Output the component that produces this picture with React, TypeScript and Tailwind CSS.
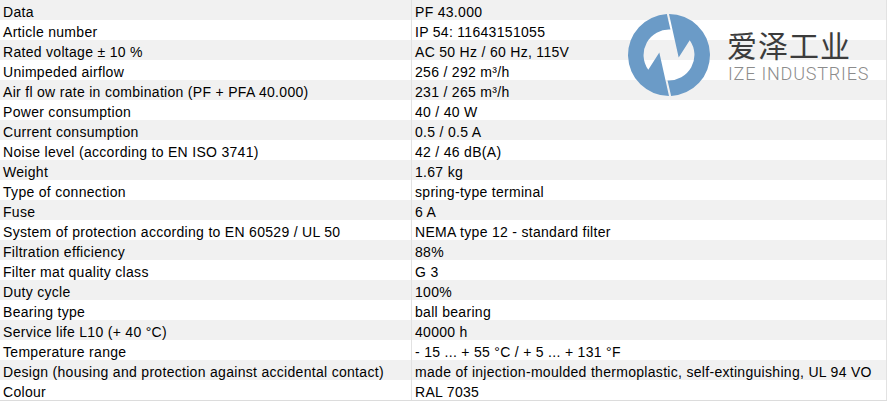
import React from 'react';

const rows: [string, string][] = [
  ['Data', 'PF 43.000'],
  ['Article number', 'IP 54: 11643151055'],
  ['Rated voltage ± 10 %', 'AC 50 Hz / 60 Hz, 115V'],
  ['Unimpeded airflow', '256 / 292 m³/h'],
  ['Air fl ow rate in combination (PF + PFA 40.000)', '231 / 265 m³/h'],
  ['Power consumption', '40 / 40 W'],
  ['Current consumption', '0.5 / 0.5 A'],
  ['Noise level (according to EN ISO 3741)', '42 / 46 dB(A)'],
  ['Weight', '1.67 kg'],
  ['Type of connection', 'spring-type terminal'],
  ['Fuse', '6 A'],
  ['System of protection according to EN 60529 / UL 50', 'NEMA type 12 - standard filter'],
  ['Filtration efficiency', '88%'],
  ['Filter mat quality class', 'G 3'],
  ['Duty cycle', '100%'],
  ['Bearing type', 'ball bearing'],
  ['Service life L10 (+ 40 °C)', '40000 h'],
  ['Temperature range', '- 15 ... + 55 °C / + 5 ... + 131 °F'],
  ['Design (housing and protection against accidental contact)', 'made of injection-moulded thermoplastic, self-extinguishing, UL 94 VO'],
  ['Colour', 'RAL 7035'],
];

// one half of the logo: ring arc on the right plus an arm pointing to the centre
const HOOK = 'M50 0 A50 50 0 0 1 52.62 99.93 L48.22 80.96 A31 31 0 0 0 75.27 32.03 L61.8 53 Z';

const Logo = () => (
  <svg viewBox="0 0 100 100" className="w-[82px] h-[82px]">
    <path d={HOOK} fill="#6b9bc7" />
    <path d={HOOK} fill="#6b9bc7" transform="rotate(180 50 50)" />
  </svg>
);

const App = () => {
  return (
    <div className="relative w-[888px] h-[401px] bg-white overflow-hidden font-['Liberation_Sans',Arial,sans-serif] text-[14px] tracking-[0.3px] text-black">
      <div className="w-[887px] border-b border-[#dcdcdc]">
        {rows.map(([label, value], i) => (
          <div key={label} className={`flex h-5 ${i % 2 === 0 ? 'bg-[#f1f1f1]' : 'bg-white'}`}>
            <div className="w-[412px] shrink-0 border-r border-[#e2e2e2] pl-[3px] pt-[4px] leading-4 whitespace-nowrap">
              {label}
            </div>
            <div className="flex-1 border-r border-[#e2e2e2] pl-[3px] pt-[4px] leading-4 whitespace-nowrap">
              {value}
            </div>
          </div>
        ))}
      </div>

      {/* watermark */}
      <div className="absolute left-[628px] top-[14px]">
        <Logo />
      </div>
      <div className="absolute left-[727px] top-[30px] text-[30px] leading-[28px] tracking-[1px] text-[#3c3c3c] font-['Noto_Sans_CJK_SC',sans-serif]">
        爱泽工业
      </div>
      <div className="absolute left-[728px] top-[65px] text-[18px] leading-none font-light tracking-[0.8px] text-[#8c8c8c] font-['Roboto',sans-serif] whitespace-nowrap">
        IZE INDUSTRIES
      </div>
    </div>
  );
};

export default App;
